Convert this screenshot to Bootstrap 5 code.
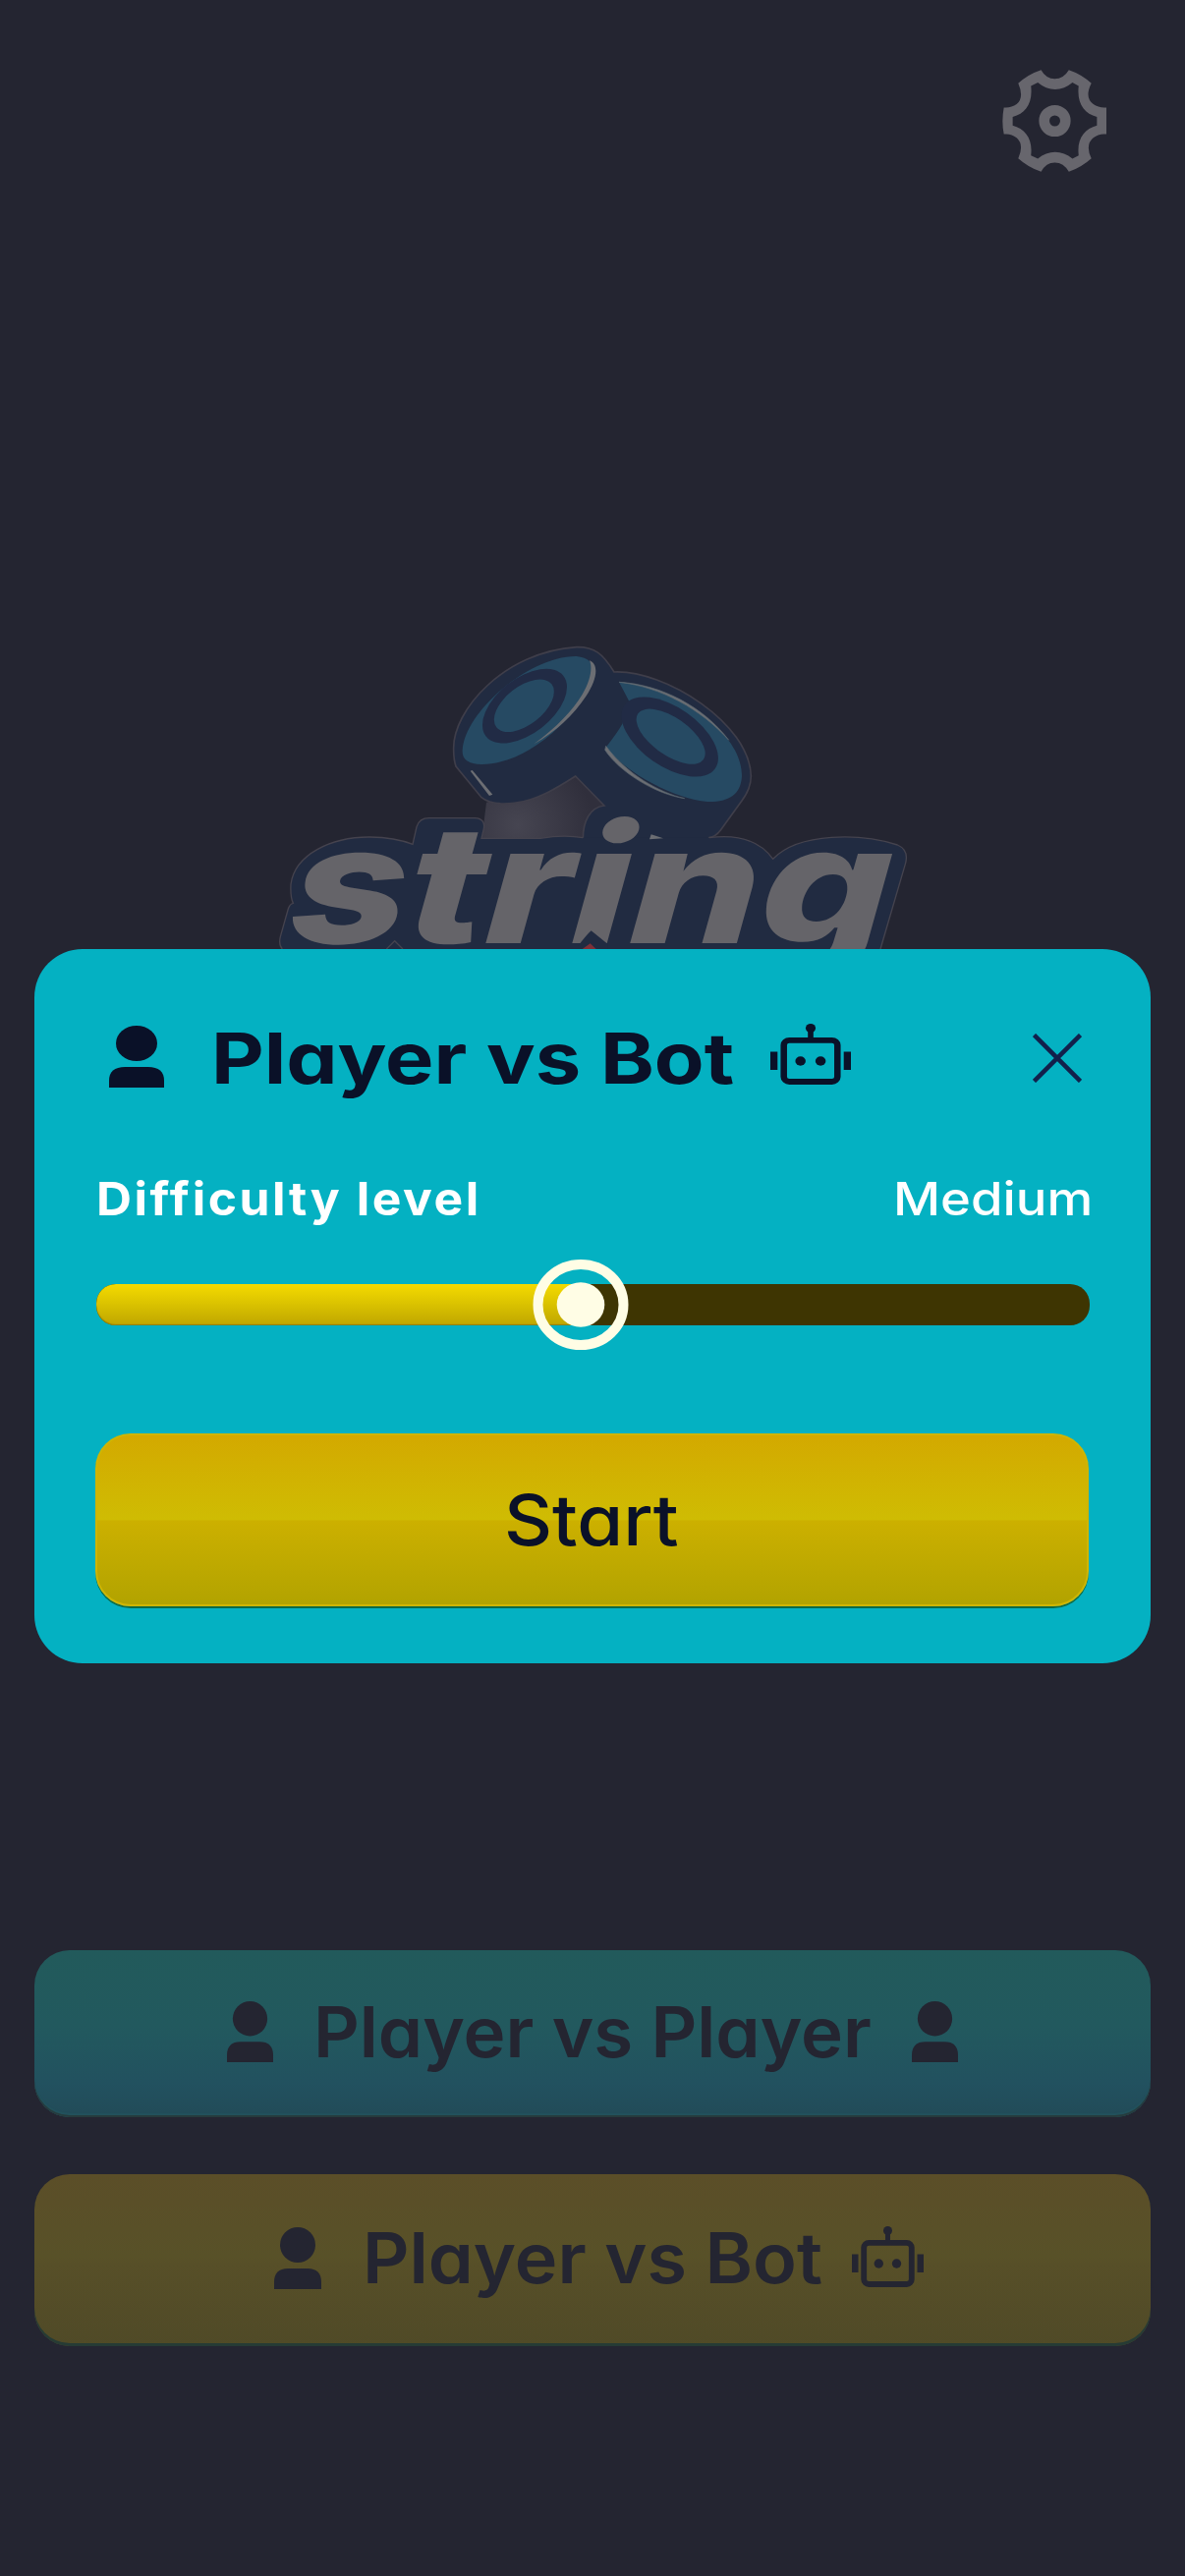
<!doctype html>
<html lang="en">

<head>
  <meta charset="utf-8">
  <meta name="viewport" content="width=device-width, initial-scale=1">
  <title>String - Player vs Bot</title>
  <link href="https://cdn.jsdelivr.net/npm/bootstrap@5.3.0/dist/css/bootstrap.min.css" rel="stylesheet">
  <style>
    body {
      background-color: #242531;
      font-family: Inter, 'Noto Sans', sans-serif;
    }

    .screen {
      height: 2622px;
      padding: 71px 35px 0;
    }

    svg {
      display: block;
      flex-shrink: 0;
    }

    .settings-btn {
      margin-right: 45px;
    }

    .logo {
      width: 680px;
      height: 326px;
      margin: 465px 0 0 225px;
      overflow: visible;
    }

    .logo-text {
      font-family: Inter, 'Noto Sans', sans-serif;
      font-weight: 800;
      font-style: italic;
      font-size: 500px;
    }

    .mode-list {
      margin-top: 1019px;
      gap: 58px;
    }

    .mode-btn {
      padding: 0 0 4px;
      border: 0;
      border-radius: 36px;
      color: #242531;
      font-size: 71px;
      font-weight: 600;
      line-height: 1;
    }

    .mode-player {
      height: 170px;
      background: linear-gradient(#225a5b, #22595e 45%, #22515f 80%, #224b58);
      box-shadow: inset 0 -2px 0 #263b3d, inset 0 -4px 1px #22525c;
    }

    .mode-bot {
      height: 175px;
      padding-left: 12px;
      background: linear-gradient(#5b4e28, #585128 48%, #574f28 52%, #504a27);
      box-shadow: inset 0 -3px 0 #263b35;
    }

    /* single-storey "a", widened to the lettering of the game */
    .fit {
      display: block;
      flex-shrink: 0;
      white-space: nowrap;
      text-align: left;
      transform-origin: 0 50%;
      transform: scaleX(1.038);
      font-feature-settings: "cv11";
    }

    .mode-player .fit {
      transform: scaleX(1.023);
    }

    .dialog-title .fit {
      padding-top: 3px;
      transform: scaleX(1.153);
    }

    .level-row .level-name {
      letter-spacing: 2.4px;
      transform: scaleX(1.06);
    }

    .level-row .level-value {
      transform: scaleX(1.12);
    }

    .start-btn .fit {
      transform: scaleX(1.07);
    }

    .dialog-box {
      top: 966px;
      left: 35px;
      width: 1136px;
      height: 727px;
      padding: 72px 62px 0;
      border-radius: 49px;
      background: #04b1c2;
    }

    .dialog-title {
      height: 74px;
      color: #0a1128;
      font-size: 72px;
      font-weight: 700;
      line-height: 1;
    }

    .level-row {
      margin-top: 84px;
      padding-left: 1px;
      color: #fff;
      font-size: 47px;
      line-height: 1;
    }

    .slider-track {
      width: 1011px;
      height: 42px;
      margin: 64px 0 0 1px;
      border-radius: 20px;
      background: #3e3502;
    }

    .slider-fill {
      height: 42px;
      border-radius: 20px;
      background: linear-gradient(#f4da00, #dcc400 45%, #bfa600);
      box-shadow: inset 0 -1px 1px #8f7d00;
    }

    .slider-thumb {
      left: 444px;
      top: -25px;
    }

    .start-btn {
      width: 1011px;
      height: 176px;
      margin-top: 110px;
      padding: 0;
      border: 2px solid #cfb503;
      border-radius: 36px;
      background: linear-gradient(#d3a900, #cfbc03 50%, #ccb000 50.5%, #b2a300);
      box-shadow: 0 2px 0 #0d6b45;
      color: #0a1128;
      font-size: 71px;
      font-weight: 500;
      line-height: 1;
    }
  </style>
</head>

<body>
  <!-- Shared icons -->
  <svg width="0" height="0" class="position-absolute">
    <symbol id="person" viewBox="0 0 48 63" preserveAspectRatio="none">
      <ellipse cx="24" cy="18" rx="18" ry="18" />
      <path d="M0 63V56Q0 42 14 42H34Q48 42 48 56V63Z" />
    </symbol>
    <symbol id="bot" viewBox="0 0 73 62" preserveAspectRatio="none">
      <circle cx="36.5" cy="4.5" r="4.5" />
      <path d="M34 5h5v12h-5zM0 28.5h6.5v18.5H0zM66.5 28.5H73V47h-6.5z" />
      <rect x="12.2" y="16.8" width="48.6" height="42.2" rx="5" fill="none" stroke="currentColor" stroke-width="5.8" />
      <circle cx="27.3" cy="38" r="4.7" />
      <circle cx="45.5" cy="38" r="4.7" />
    </symbol>
  </svg>

  <div class="screen position-relative d-flex flex-column overflow-hidden">

    <!-- Settings -->
    <div class="d-flex justify-content-end">
      <div class="settings-btn">
        <svg width="106" height="104" viewBox="119 93 319 312" fill="#67666d">
          <path fill-rule="evenodd" d="M168 134Q198 106 238 93Q253 120 280 120Q307 120 323 93Q362 106 392 134Q370 178 398 198Q415 210 438 208V290Q415 287 398 301Q372 322 392 364Q362 391 323 405Q307 377 280 377Q253 377 238 405Q198 391 168 364Q187 322 163 301Q146 287 124 290Q116 250 124 208Q146 210 163 198Q187 178 168 134ZM207 142C213 197 190 226 151 237V263C190 274 213 303 207 355L228 365C260 338 302 338 334 365L353 355C347 303 370 274 409 263V237C370 226 347 197 353 142L334 132C302 160 260 160 228 132Z" />
          <circle cx="280" cy="249" r="32.500" fill="none" stroke="#67666d" stroke-width="32" />
        </svg>
      </div>
    </div>

    <!-- Logo -->
    <svg class="logo" viewBox="0 0 2040 978">
      <defs>
        <radialGradient id="glow" cx="800" cy="600" r="230" gradientUnits="userSpaceOnUse">
          <stop offset="0" stop-color="#464551" />
          <stop offset="1" stop-color="#302f3c" />
        </radialGradient>
      </defs>
      <path d="M705 530L977 448L1070 545L1010 650H690Z" fill="url(#glow)" />
      <!-- pucks -->
      <g fill="#212b41" stroke="#3f3e4a" stroke-width="5">
        <path d="M1095 132C1250 125 1510 290 1513 450C1513 480 1500 505 1485 525L1420 615Q1405 635 1385 638V720H1000V640C1000 590 1020 545 1065 540L977 450C930 480 860 525 790 532Q720 540 690 515L612 420Q605 400 605 370C600 250 760 70 980 56C1035 55 1060 75 1095 132Z" />
      </g>
      <path d="M632 370C640 250 840 82 980 84C1045 90 1042 140 1010 190C940 320 800 415 690 414C650 412 630 400 632 370Z" fill="#264a63" />
      <path d="M1020 97C1052 110 1040 160 1010 205C970 265 920 312 850 352C920 300 968 250 998 200C1022 160 1030 120 1020 97ZM662 432L724 506L714 510L656 434Z" fill="#6c6e73" />
      <ellipse cx="822" cy="236" rx="150" ry="84" transform="rotate(-38 822 236)" fill="#212b45" />
      <ellipse cx="820" cy="235" rx="107" ry="58" transform="rotate(-38 820 235)" fill="#264a63" />
      <path d="M1110 163C1250 170 1485 300 1485 450C1482 510 1440 530 1380 528C1280 520 1130 440 1070 362Q1110 310 1120 290L1140 220Z" fill="#264a63" />
      <path d="M1110 163C1240 170 1370 240 1445 340C1360 246 1240 178 1110 163ZM1070 358C1130 440 1230 500 1310 518C1220 505 1110 436 1067 370Z" fill="#6c6e73" stroke="#5b6670" stroke-width="2" />
      <ellipse cx="1265" cy="330" rx="169" ry="90" transform="rotate(35 1265 330)" fill="#212b45" />
      <ellipse cx="1268" cy="329" rx="122" ry="57" transform="rotate(35 1268 329)" fill="#264a63" />
      <!-- name plate -->
      <path d="M82 978Q70 965 76 940L100 855Q105 840 115 838Q106 820 108 780C120 690 230 635 350 636Q425 637 480 658L492 605Q500 578 530 578H670Q705 580 696 615L690 640H870Q940 628 1000 638H1385Q1520 620 1580 703C1660 620 1850 625 1960 660Q1995 675 1985 715L1908 978Z" fill="#212b41" />
      <path d="M82 978Q70 965 76 940L100 855Q105 840 115 838Q106 820 108 780C120 690 230 635 350 636Q425 637 480 658L492 605Q500 578 530 578H670Q705 580 696 615L690 640H870Q940 628 1000 638M1385 638Q1520 620 1580 703C1660 620 1850 625 1960 660Q1995 675 1985 715L1908 978M400 978L425 953L450 978" fill="none" stroke="#45434e" stroke-width="4" />
      <g transform="translate(100 960) skewX(-4)">
        <text class="logo-text" textLength="1832" lengthAdjust="spacingAndGlyphs" fill="#656469">string</text>
      </g>
      <path d="M978 978Q1010 935 1025 922L1075 962V978Z" fill="#212b41" />
      <path d="M998 978L1022 961L1040 978Z" fill="#7d3038" />
      <path d="M1208 628L1245 640L1203 643Z" fill="#6c6e73" />
    </svg>

    <!-- Game modes -->
    <div class="mode-list d-flex flex-column">
      <button type="button" class="mode-btn mode-player d-flex align-items-center justify-content-center">
        <svg width="47" height="62" fill="currentColor"><use href="#person" /></svg>
        <span class="fit" style="width: 566px; margin: 0 43px 0 41px">Player vs Player</span>
        <svg width="47" height="62" fill="currentColor"><use href="#person" /></svg>
      </button>
      <button type="button" class="mode-btn mode-bot d-flex align-items-center justify-content-center">
        <svg width="48" height="63" fill="currentColor"><use href="#person" /></svg>
        <span class="fit" style="width: 465px; margin: 0 33px 0 42px">Player vs Bot</span>
        <svg class="mb-1" width="73" height="62" fill="currentColor"><use href="#bot" /></svg>
      </button>
    </div>

    <!-- Start dialog -->
    <div class="dialog-box position-absolute">
      <div class="dialog-title d-flex align-items-center">
        <svg width="56" height="63" fill="currentColor" style="margin-left: 14px"><use href="#person" /></svg>
        <span class="fit" style="width: 531px; margin: 0 38px 0 48px">Player vs Bot</span>
        <svg class="mb-1" width="82" height="62" fill="currentColor"><use href="#bot" /></svg>
        <svg class="ms-auto me-2 mt-1" width="50" height="50" viewBox="0 0 50 50" stroke="#12204b" stroke-width="4.500"><path d="M1.500 1.500L48.500 48.500M48.500 1.500L1.500 48.500" /></svg>
      </div>

      <div class="level-row d-flex justify-content-between">
        <span class="fit level-name fw-bold" style="width: 384px">Difficulty level</span>
        <span class="fit level-value" style="width: 200px; font-weight: 500">Medium</span>
      </div>

      <div class="slider-track position-relative">
        <div class="slider-fill" style="width: 50%"></div>
        <svg class="slider-thumb position-absolute" width="98" height="92" viewBox="0 0 98 92">
          <ellipse cx="49" cy="46" rx="43.500" ry="41" fill="none" stroke="#fffde5" stroke-width="10" />
          <ellipse cx="49" cy="46" rx="24.300" ry="22.800" fill="#fffde5" />
        </svg>
      </div>

      <button type="button" class="start-btn d-flex align-items-center justify-content-center">
        <span class="fit" style="width: 179px">Start</span>
      </button>
    </div>
  </div>

  <script src="https://cdn.jsdelivr.net/npm/bootstrap@5.3.0/dist/js/bootstrap.bundle.min.js"></script>
</body>

</html>
